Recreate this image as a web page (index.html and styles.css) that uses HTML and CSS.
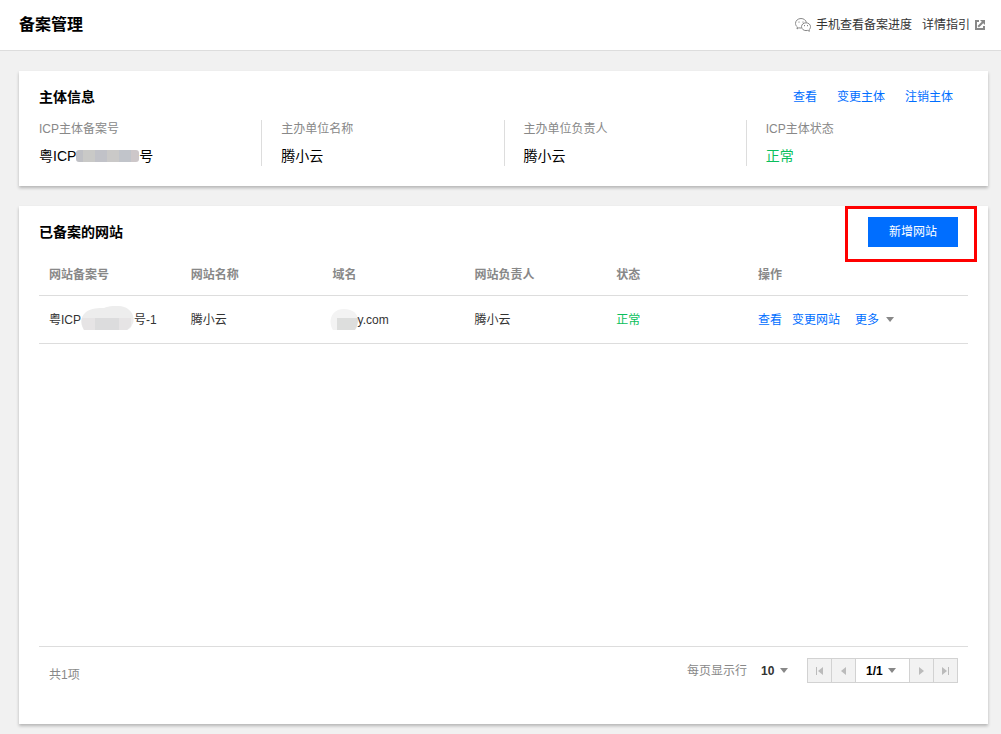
FILE: index.html
```html
<!DOCTYPE html>
<html lang="zh-CN">
<head>
<meta charset="utf-8">
<title>备案管理</title>
<link rel="stylesheet" href="styles.css">
</head>
<body>
<header class="topbar">
  <h1 class="topbar-title">备案管理</h1>
  <nav class="topbar-nav">
    <a class="topbar-link" href="#">
      <svg width="16" height="14" viewBox="0 0 16 14" fill="none" stroke="#888">
        <path d="M6.200 10c-.8.1-1.600 0-2.400-.2L2 11l.4-2C1.200 8.100.5 6.900.5 5.400.5 2.700 2.900.5 6 .5c2.700 0 5 1.700 5.400 4.100"/>
        <path d="M15.500 8.700c0-2.200-2-3.900-4.500-3.900S6.500 6.500 6.500 8.700s2 3.900 4.500 3.900c.6 0 1.200-.1 1.700-.2l1.700.9-.4-1.500c1-.8 1.500-1.800 1.500-3.100z"/>
        <path d="M4 3.500v1.200M8 3.500v1.200M9.500 7v1.200M12.500 7v1.200"/>
      </svg>
      <span>手机查看备案进度</span>
    </a>
    <a class="topbar-link" href="#">
      <span>详情指引</span>
      <svg width="10" height="10" viewBox="0 0 10 10" fill="none" stroke="#888" stroke-width="2">
        <path d="M4 1H1v8h8V6"/>
        <path d="M3.200 6.800l4.800-4.800"/>
        <path d="M5 0h5v5z" fill="#888" stroke="none"/>
      </svg>
    </a>
  </nav>
</header>

<main class="content">
  <section class="card">
    <div class="card-head">
      <h2 class="card-title">主体信息</h2>
      <nav class="card-links">
        <a href="#">查看</a>
        <a href="#">变更主体</a>
        <a href="#">注销主体</a>
      </nav>
    </div>
    <dl class="facts">
      <div class="fact"><dt>ICP主体备案号</dt><dd>粤ICP<span class="mask"></span>号</dd></div>
      <div class="fact"><dt>主办单位名称</dt><dd>腾小云</dd></div>
      <div class="fact"><dt>主办单位负责人</dt><dd>腾小云</dd></div>
      <div class="fact"><dt>ICP主体状态</dt><dd class="ok">正常</dd></div>
    </dl>
  </section>

  <section class="card card-sites">
    <div class="sites-head">
      <h2 class="card-title">已备案的网站</h2>
      <div class="callout"><button class="primary" type="button">新增网站</button></div>
    </div>
    <table class="sites">
      <thead>
        <tr><th>网站备案号</th><th>网站名称</th><th>域名</th><th>网站负责人</th><th>状态</th><th class="col-actions">操作</th></tr>
      </thead>
      <tbody>
        <tr>
          <td>
            <div class="masked-cell">粤ICP<svg width="53" height="24" viewBox="0 0 53 24">
              <path d="M3 24C-1 18-1 11 5 6c5-4 13-4 18-4C30-1 42-1 47 3c6 4 7 12 4 16-1 3-3 4-5 5z" fill="#ededed"/>
              <path d="M14 12h24v12H14z" fill="#dcdcdd"/>
              <path d="M38 12h12v8l-4 4h-8zM1 12h13v12H3c-2-4-3-8-2-12z" fill="#e6e4e5"/>
            </svg>号-1</div>
          </td>
          <td>腾小云</td>
          <td>
            <div class="masked-cell masked-domain"><svg width="28" height="21" viewBox="0 0 28 21">
              <path d="M3 21C-2 14 0 0 14 0c9 0 14 5 14 11 0 5-1 8-3 10z" fill="#f3f3f3"/>
              <path d="M7 9h21c0 5-1 9-3 12H7z" fill="#dddedd"/>
            </svg>y.com</div>
          </td>
          <td>腾小云</td>
          <td class="ok">正常</td>
          <td>
            <div class="actions">
              <a href="#">查看</a>
              <a href="#">变更网站</a>
              <button class="more" type="button">更多<span class="caret"></span></button>
            </div>
          </td>
        </tr>
      </tbody>
    </table>
    <footer class="pagination">
      <span class="total">共1项</span>
      <div class="paging">
        <label for="size">每页显示行</label>
        <span class="picker picker-size">
          <select id="size"><option>10</option></select><span class="caret"></span>
        </span>
        <div class="pager">
          <button type="button" aria-label="第一页" disabled><svg width="7" height="8" viewBox="0 0 7 8"><path d="M0 0h1v8H0zM7 0v8L2 4z"/></svg></button>
          <button type="button" aria-label="上一页" disabled><svg width="7" height="8" viewBox="0 0 7 8"><path d="M6 0v8L1 4z"/></svg></button>
          <span class="picker picker-page">
            <select aria-label="页码"><option>1/1</option></select><span class="caret"></span>
          </span>
          <button type="button" aria-label="下一页" disabled><svg width="7" height="8" viewBox="0 0 7 8"><path d="M1 0v8l5-4z"/></svg></button>
          <button type="button" aria-label="最后一页" disabled><svg width="7" height="8" viewBox="0 0 7 8"><path d="M6 0h1v8H6zM0 0v8l5-4z"/></svg></button>
        </div>
      </div>
    </footer>
  </section>
</main>
</body>
</html>
```
FILE: styles.css
```css
* { box-sizing: border-box; }

body {
  display: flex;
  flex-direction: column;
  min-height: 100vh;
  margin: 0;
  background: #f1f1f1;
  color: #333;
  font: 12px/18px "Liberation Sans", "Noto Sans CJK SC", sans-serif;
}

h1, h2, dl, dd { margin: 0; }

a { color: #006eff; text-decoration: none; }

button, select {
  margin: 0;
  padding: 0;
  border: 0;
  background: none;
  color: inherit;
  font: inherit;
}

.topbar {
  display: flex;
  align-items: center;
  justify-content: space-between;
  height: 51px;
  padding: 0 16px 0 19px;
  border-bottom: 1px solid #ddd;
  background: #fff;
}

.topbar-title { color: #000; font-size: 16px; line-height: 24px; }
.topbar-nav { display: flex; gap: 10px; }
.topbar-link { display: flex; align-items: center; gap: 5px; color: #333; }

.content {
  display: flex;
  flex: 1;
  flex-direction: column;
  gap: 20px;
  padding: 20px 13px 10px 19px;
}

.card {
  padding: 16px 0 20px;
  background: #fff;
  box-shadow: 0 2px 3px rgba(0, 0, 0, 0.25);
}

.card-title { color: #000; font-size: 14px; line-height: 20px; }

.card-head {
  display: flex;
  justify-content: space-between;
  align-items: center;
  padding: 0 35px 0 20px;
}

.card-links { display: flex; gap: 20px; }

.facts {
  display: grid;
  grid-template-columns: repeat(4, 1fr);
  margin-top: 13px;
}

.fact { padding-left: 20px; }
.fact + .fact { padding-left: 19px; border-left: 1px solid #ddd; }
.fact dt { color: #888; }
.fact dd {
  display: flex;
  align-items: center;
  margin-top: 8px;
  color: #000;
  font-size: 14px;
  line-height: 20px;
}

.mask {
  width: 63px;
  height: 12px;
  border-radius: 3px;
  background: linear-gradient(90deg, #bfc0c5 0 7px, #c9c9c7 7px 19px, #c1c2c8 19px 31px, #cac9c8 31px 43px, #c1c4ca 43px 55px, #cdc7c9 55px);
}

.fact .ok, .ok { color: #0abf5b; }

.card-sites {
  display: flex;
  flex: 1;
  flex-direction: column;
  padding: 11px 20px 40px;
}

.sites-head {
  display: flex;
  justify-content: space-between;
  align-items: center;
  padding-right: 10px;
}

.primary {
  display: block;
  width: 90px;
  height: 30px;
  background: #006eff;
  color: #fff;
}

.callout { position: relative; }
.callout::after {
  content: "";
  position: absolute;
  inset: -11px -19px -15px -23px;
  border: 3px solid #f00;
  pointer-events: none;
}

.sites {
  width: 100%;
  margin-top: 8px;
  border-collapse: separate;
  border-spacing: 0;
  table-layout: fixed;
}

.sites th, .sites td {
  height: 48px;
  padding: 0 10px;
  border-bottom: 1px solid #ddd;
  text-align: left;
}
.sites th { height: 41px; color: #888; }
.col-actions { width: 220px; }

.masked-cell { display: flex; align-items: center; }
.masked-cell svg { flex: none; margin-bottom: 3px; }
.masked-domain { margin-left: -3px; }
.masked-domain svg { margin-bottom: 0; }

.actions { display: flex; gap: 10px; }
.more {
  display: flex;
  align-items: center;
  gap: 7px;
  padding-left: 5px;
  color: #006eff;
}

.caret {
  width: 8px;
  height: 5px;
  background: #888;
  clip-path: polygon(0 0, 100% 0, 50% 100%);
}

.pagination {
  display: flex;
  justify-content: space-between;
  align-items: flex-start;
  margin-top: auto;
  padding: 11px 10px 0;
  border-top: 1px solid #ddd;
  color: #888;
}

.total { padding-top: 8px; }
.paging { display: flex; align-items: center; }

.picker { position: relative; display: flex; align-items: center; color: #000; }
.picker select { width: 100%; height: 23px; appearance: none; font-weight: bold; }
.picker .caret { position: absolute; right: 0; pointer-events: none; }

.picker-size { width: 27px; margin: 0 19px 0 14px; color: #333; }

.pager { display: flex; height: 25px; border: 1px solid #d2d2d2; }
.pager button {
  display: grid;
  place-items: center;
  width: 23px;
  background: #f2f2f2;
  fill: #bbb;
}
.pager button + button { width: 24px; border-left: 1px solid #d2d2d2; }

.picker-page {
  width: 55px;
  border: solid #d2d2d2;
  border-width: 0 1px;
}
.picker-page select { padding-left: 10px; }
.picker-page .caret { right: 13px; }
```
